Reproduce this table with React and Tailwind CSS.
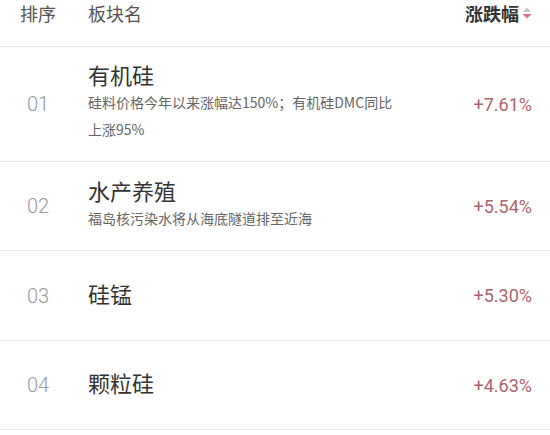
import React from "react";

const rows = [
  {
    rank: "01",
    name: "有机硅",
    desc: "硅料价格今年以来涨幅达150%；有机硅DMC同比上涨95%",
    change: "+7.61%",
    h: "h-[115px]",
  },
  {
    rank: "02",
    name: "水产养殖",
    desc: "福岛核污染水将从海底隧道排至近海",
    change: "+5.54%",
    h: "h-[89px]",
  },
  { rank: "03", name: "硅锰", change: "+5.30%", h: "h-[90px]" },
  { rank: "04", name: "颗粒硅", change: "+4.63%", h: "h-[89px]" },
];

const cjk = "font-['Noto_Sans_CJK_SC',sans-serif]";
const num = "font-['Roboto','Noto_Sans_CJK_SC',sans-serif]";

const SortIcon = () => (
  <svg width="12" height="12" viewBox="0 0 11 12" className="ml-[2px]">
    <path d="M1 5 L5.5 0.5 L10 5 Z" fill="#c9c9c9" />
    <path d="M1 7 L5.5 11.5 L10 7 Z" fill="#e0707c" />
  </svg>
);

export default function App() {
  return (
    <div className={`w-[550px] h-[435px] bg-white overflow-hidden ${cjk}`}>
      {/* header */}
      <div className="flex items-start h-[47px] border-b border-[#e6e6e6] text-[18px] leading-[26px]">
        <div className="w-[88px] pl-[20px] text-[#555]">排序</div>
        <div className="flex-1 text-[#555]">板块名</div>
        <div className="flex items-center pr-[17px] font-bold text-[#333]">
          涨跌幅
          <SortIcon />
        </div>
      </div>

      {rows.map((r) => (
        <div
          key={r.rank}
          className={`flex items-center ${r.h} border-b border-[#e8e8e8]`}
        >
          <div className={`w-[88px] pl-[27px] text-[20px] font-light text-[#9a9a9a] ${num}`}>
            {r.rank}
          </div>
          <div className="flex-1 pb-[6px]">
            <div className="text-[22px] leading-[30px] text-[#333]">{r.name}</div>
            {r.desc && (
              <div className="w-[316px] text-[14px] leading-[27px] text-[#666]">
                {r.desc}
              </div>
            )}
          </div>
          <div className={`pr-[18px] text-[18px] text-[#ad646d] ${num}`}>
            {r.change}
          </div>
        </div>
      ))}
    </div>
  );
}
